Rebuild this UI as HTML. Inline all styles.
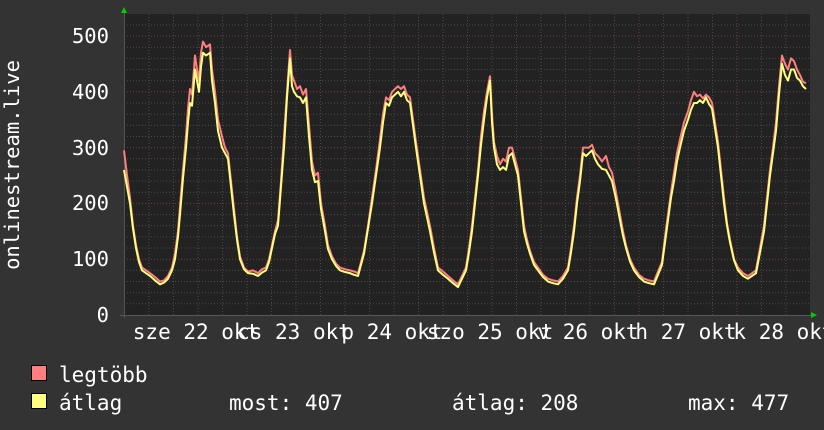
<!DOCTYPE html>
<html><head><meta charset="utf-8"><style>
html,body{margin:0;padding:0;background:#333333;}
svg{display:block;}
text{font-family:"DejaVu Sans Mono","Liberation Mono",monospace;fill:#ffffff;}
</style></head><body>
<svg width="824" height="430" viewBox="0 0 824 430" xmlns="http://www.w3.org/2000/svg">
<rect x="0" y="0" width="824" height="430" fill="#333333"/>
<rect x="124" y="14" width="686" height="301" fill="#222222"/>
<g stroke="#4a4a4a" stroke-width="1" stroke-dasharray="1,2">
<line x1="124" y1="303.8" x2="810" y2="303.8"/><line x1="124" y1="292.7" x2="810" y2="292.7"/><line x1="124" y1="281.5" x2="810" y2="281.5"/><line x1="124" y1="270.4" x2="810" y2="270.4"/>
<line x1="124" y1="248" x2="810" y2="248"/><line x1="124" y1="236.9" x2="810" y2="236.9"/><line x1="124" y1="225.7" x2="810" y2="225.7"/><line x1="124" y1="214.6" x2="810" y2="214.6"/>
<line x1="124" y1="192.3" x2="810" y2="192.3"/><line x1="124" y1="181.1" x2="810" y2="181.1"/><line x1="124" y1="170" x2="810" y2="170"/><line x1="124" y1="158.8" x2="810" y2="158.8"/>
<line x1="124" y1="136.5" x2="810" y2="136.5"/><line x1="124" y1="125.3" x2="810" y2="125.3"/><line x1="124" y1="114.2" x2="810" y2="114.2"/><line x1="124" y1="103" x2="810" y2="103"/>
<line x1="124" y1="80.7" x2="810" y2="80.7"/><line x1="124" y1="69.6" x2="810" y2="69.6"/><line x1="124" y1="58.4" x2="810" y2="58.4"/><line x1="124" y1="47.2" x2="810" y2="47.2"/>
<line x1="124" y1="25" x2="810" y2="25"/>
</g>
<g stroke="#4a4a4a" stroke-width="1" stroke-dasharray="1,2">
<line x1="173.5" y1="14" x2="173.5" y2="315"/><line x1="198" y1="14" x2="198" y2="315"/><line x1="222.5" y1="14" x2="222.5" y2="315"/>
<line x1="271.5" y1="14" x2="271.5" y2="315"/><line x1="296" y1="14" x2="296" y2="315"/><line x1="320.5" y1="14" x2="320.5" y2="315"/>
<line x1="369.5" y1="14" x2="369.5" y2="315"/><line x1="394" y1="14" x2="394" y2="315"/><line x1="418.5" y1="14" x2="418.5" y2="315"/>
<line x1="467.5" y1="14" x2="467.5" y2="315"/><line x1="492" y1="14" x2="492" y2="315"/><line x1="516.5" y1="14" x2="516.5" y2="315"/>
<line x1="565.5" y1="14" x2="565.5" y2="315"/><line x1="590" y1="14" x2="590" y2="315"/><line x1="614.5" y1="14" x2="614.5" y2="315"/>
<line x1="663.5" y1="14" x2="663.5" y2="315"/><line x1="688" y1="14" x2="688" y2="315"/><line x1="712.5" y1="14" x2="712.5" y2="315"/>
<line x1="761.5" y1="14" x2="761.5" y2="315"/><line x1="786" y1="14" x2="786" y2="315"/>
</g>
<g stroke="#6a4040" stroke-width="1" stroke-dasharray="1,2">
<line x1="124" y1="259.2" x2="810" y2="259.2"/><line x1="124" y1="203.4" x2="810" y2="203.4"/><line x1="124" y1="147.6" x2="810" y2="147.6"/><line x1="124" y1="91.8" x2="810" y2="91.8"/><line x1="124" y1="36" x2="810" y2="36"/>
<line x1="149" y1="14" x2="149" y2="315"/><line x1="247" y1="14" x2="247" y2="315"/><line x1="345" y1="14" x2="345" y2="315"/><line x1="443" y1="14" x2="443" y2="315"/><line x1="541" y1="14" x2="541" y2="315"/><line x1="639" y1="14" x2="639" y2="315"/><line x1="737" y1="14" x2="737" y2="315"/>
</g>
<line x1="120" y1="315.5" x2="812" y2="315.5" stroke="#555" stroke-width="1"/>
<line x1="124.5" y1="12" x2="124.5" y2="318" stroke="#555" stroke-width="1"/>
<polygon points="121,13 127,13 124,7" fill="#00cc00"/>
<polygon points="811,312 811,318 817,315" fill="#00cc00"/>
<g transform="translate(0,315) scale(1,-0.558)" fill="none" stroke-linejoin="round">
<polyline vector-effect="non-scaling-stroke" stroke="#ff7f7f" stroke-width="2" points="124,295 127,250 130,210 133,160 136,125 139,100 142,85 146,80 150,75 155,68 160,60 164,62 168,70 172,85 175,110 178,150 180,195 183,260 186,320 188,370 190,405 192,395 195,465 197,440 199,420 201,470 203,490 206,480 210,485 212,440 215,400 218,350 222,320 225,300 228,290 231,240 234,190 237,140 240,105 244,85 248,78 253,80 258,75 262,82 266,85 269,100 272,125 275,150 278,170 281,240 284,320 287,400 290,475 292,430 294,420 297,405 300,410 303,395 306,405 309,340 312,275 315,250 318,255 321,200 325,160 328,125 332,105 336,92 340,85 345,82 350,80 354,78 358,75 361,95 364,115 368,160 372,210 376,260 380,315 383,360 386,390 389,385 392,400 395,405 398,410 401,405 404,410 407,395 410,390 413,350 416,310 420,260 424,210 427,185 430,160 434,120 438,85 443,78 448,70 453,62 458,55 462,70 466,85 469,120 472,160 475,210 478,260 481,320 484,365 487,400 490,428 492,360 494,310 497,285 500,270 503,280 506,275 509,300 512,300 515,280 518,260 521,210 524,160 527,135 530,115 534,95 538,85 543,72 548,65 553,62 558,60 563,70 568,85 571,120 574,160 577,210 580,250 583,300 586,300 589,300 592,305 595,290 598,285 602,275 606,285 609,265 612,255 616,220 620,180 623,150 626,125 630,100 634,85 639,72 644,65 649,62 654,60 658,78 662,95 665,140 668,180 671,220 674,255 677,290 680,315 684,345 688,365 691,385 694,400 697,392 700,395 703,388 706,395 709,390 712,380 715,345 718,310 721,260 724,210 727,165 730,135 734,100 738,85 743,75 748,70 752,75 756,80 760,120 764,160 767,210 770,260 773,300 776,345 779,410 782,465 785,450 788,440 791,460 794,455 797,440 800,430 803,418 806,415"/>
<polyline vector-effect="non-scaling-stroke" stroke="#ffff80" stroke-width="2" points="124,260 127,230 130,200 133,155 136,120 139,95 142,80 146,75 150,70 155,62 160,55 164,58 168,65 172,80 175,100 178,140 180,180 183,245 186,300 188,345 190,380 192,375 195,440 197,420 199,400 201,445 203,470 206,465 210,470 212,420 215,380 218,330 222,300 225,290 228,280 231,230 234,180 237,135 240,100 244,82 248,75 253,74 258,70 262,76 266,80 269,95 272,120 275,145 278,160 281,230 284,300 287,390 290,460 292,410 294,400 297,392 300,390 303,380 306,390 309,320 312,260 315,238 318,240 321,190 325,150 328,118 332,100 336,88 340,80 345,77 350,75 354,72 358,70 361,90 364,110 368,155 372,200 376,250 380,300 383,345 386,380 389,375 392,390 395,395 398,400 401,392 404,400 407,385 410,380 413,340 416,300 420,250 424,200 427,175 430,150 434,112 438,80 443,72 448,65 453,57 458,50 462,65 466,80 469,112 472,150 475,200 478,250 481,305 484,350 487,390 490,420 492,345 494,300 497,270 500,260 503,265 506,260 509,285 512,290 515,270 518,250 521,200 524,150 527,128 530,110 534,90 538,80 543,68 548,60 553,57 558,55 563,65 568,80 571,112 574,150 577,200 580,240 583,290 586,285 589,290 592,295 595,280 598,270 602,262 606,260 609,250 612,240 616,208 620,170 623,142 626,120 630,96 634,80 639,68 644,60 649,57 654,55 658,72 662,90 665,130 668,170 671,210 674,240 677,275 680,300 684,330 688,350 691,368 694,380 697,380 700,385 703,380 706,390 709,378 712,370 715,335 718,300 721,250 724,200 727,160 730,130 734,98 738,80 743,70 748,65 752,70 756,75 760,112 764,150 767,200 770,250 773,290 776,330 779,395 782,450 785,430 788,420 791,440 794,440 797,425 800,420 803,410 806,405"/>
</g>
<g font-size="20.5" text-anchor="end">
<text x="109" y="322">0</text>
<text x="109" y="266">100</text>
<text x="109" y="210">200</text>
<text x="109" y="155">300</text>
<text x="109" y="99">400</text>
<text x="109" y="43">500</text>
</g>
<text font-size="20.5" transform="translate(19,165) rotate(-90)" text-anchor="middle">onlinestream.live</text>
<g font-size="21" text-anchor="middle">
<text x="196" y="339">sze 22 okt</text>
<text x="294" y="339">cs 23 okt</text>
<text x="392" y="339">p 24 okt</text>
<text x="490" y="339">szo 25 okt</text>
<text x="588" y="339">v 26 okt</text>
<text x="686" y="339">h 27 okt</text>
<text x="784" y="339">k 28 okt</text>
</g>
<rect x="31.5" y="365.5" width="15" height="15" fill="#ff7f7f" stroke="#000" stroke-width="1"/>
<rect x="31.5" y="393.5" width="15" height="15" fill="#ffff80" stroke="#000" stroke-width="1"/>
<g font-size="21">
<text x="59" y="382">legtöbb</text>
<text x="59" y="410">átlag</text>
<text x="229" y="410">most: 407</text>
<text x="452" y="410">átlag: 208</text>
<text x="688" y="410">max: 477</text>
</g>
</svg>
</body></html>
